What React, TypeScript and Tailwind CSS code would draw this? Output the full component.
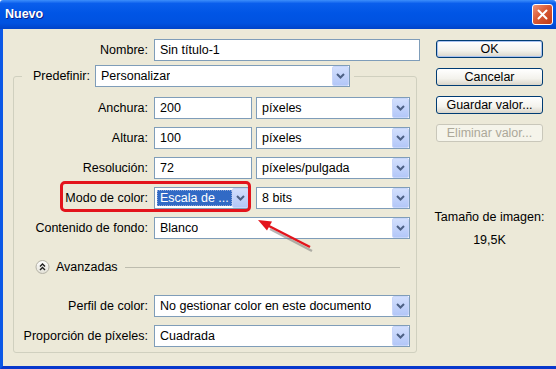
import React from "react"

const Chevron = () => (
  <svg width="9" height="6" viewBox="0 0 9 6">
    <path d="M1 1l3.5 3.5L8 1" fill="none" stroke="#4D6185" strokeWidth="2" />
  </svg>
)

// XP combo arrow button
const DropButton = () => (
  <div className="ml-auto flex h-full w-[17px] shrink-0 items-center justify-center rounded-[2px] border border-[#C8D6FA] bg-[linear-gradient(to_bottom,#D2DFFD,#B3C7F8)]">
    <Chevron />
  </div>
)

function Combo({ value, className }: { value: React.ReactNode; className: string }) {
  return (
    <div className={"flex h-[22px] items-center border border-[#7F9DB9] bg-white " + className}>
      <span className="truncate pl-[5px]">{value}</span>
      <DropButton />
    </div>
  )
}

function TextBox({ value, className }: { value: string; className: string }) {
  return (
    <div className={"flex h-[22px] items-center border border-[#7F9DB9] bg-white pl-[5px] " + className}>
      {value}
    </div>
  )
}

function Row({ label, children }: { label: string; children: React.ReactNode }) {
  return (
    <div className="relative flex h-[22px] items-center">
      <span className="w-[134px] whitespace-nowrap text-right">{label}</span>
      <div className="ml-[6px] flex">{children}</div>
    </div>
  )
}

function XPButton({ label, primary, disabled }: { label: string; primary?: boolean; disabled?: boolean }) {
  if (disabled) {
    return (
      <div className="flex h-[18px] items-center justify-center rounded-[3px] border border-[#C9C7BA] bg-[#F5F4EA] text-[#ACA899]">
        {label}
      </div>
    )
  }
  return (
    <div
      className={
        "flex h-[18px] items-center justify-center rounded-[3px] border border-[#003C74] bg-[linear-gradient(to_bottom,#FFFFFF,#F3F2EC_60%,#D9D5CA)] " +
        (primary ? "shadow-[inset_0_0_0_1px_#A9C2F0]" : "")
      }
    >
      {label}
    </div>
  )
}

export default function App() {
  return (
    <div className="relative flex h-[369px] w-[556px] flex-col overflow-hidden font-['Liberation_Sans',Arial,sans-serif] text-[12.5px] text-black">
      {/* title bar */}
      <div className="flex h-[29px] items-center rounded-t-[3px] bg-[linear-gradient(to_bottom,#3D8EFB_0%,#0A5EEC_12%,#0055E5_45%,#0052E0_80%,#0043C9_100%)] pl-[5px] pr-[3px]">
        <span className="text-[12.5px] font-bold text-white [text-shadow:1px_1px_0_#0A1E8A]">Nuevo</span>
        <div className="ml-auto flex h-[21px] w-[21px] items-center justify-center rounded-[3px] border border-white bg-[linear-gradient(135deg,#F0957A,#D85A36_45%,#C13B17)]">
          <svg width="11" height="11" viewBox="0 0 11 11">
            <path d="M1.5 1.5l8 8M9.5 1.5l-8 8" stroke="white" strokeWidth="2" strokeLinecap="round" />
          </svg>
        </div>
      </div>

      <div className="flex flex-1 border-b-[3px] border-l-[3px] border-b-[#0838CC] border-l-[#0B58E6] bg-[#ECE9D8]">
        {/* left side */}
        <div className="ml-[10px] w-[407px] pt-[10px]">
          <div className="flex h-[22px] items-center">
            <span className="w-[135px] text-right">Nombre:</span>
            <TextBox value="Sin título-1" className="ml-[6px] w-[266px]" />
          </div>

          <fieldset className="mt-[4px] w-[404px] rounded-[3px] border border-[#D0D0BF] pb-[5px]">
            <legend className="ml-[8px] flex items-center pr-[4px]">
              <span className="w-[68px] text-right">Predefinir:</span>
              <Combo value="Personalizar" className="ml-[5px] w-[255px]" />
            </legend>

            <div className="mt-[10px] flex flex-col gap-[8px]">
              <Row label="Anchura:">
                <TextBox value="200" className="w-[98px]" />
                <Combo value="píxeles" className="ml-[4px] w-[154px]" />
              </Row>
              <Row label="Altura:">
                <TextBox value="100" className="w-[98px]" />
                <Combo value="píxeles" className="ml-[4px] w-[154px]" />
              </Row>
              <Row label="Resolución:">
                <TextBox value="72" className="w-[98px]" />
                <Combo value="píxeles/pulgada" className="ml-[4px] w-[154px]" />
              </Row>
              <Row label="Modo de color:">
                <div className="flex h-[22px] w-[94px] items-center border border-[#7F9DB9] bg-white">
                  <span className="ml-[2px] flex h-[16px] items-center whitespace-nowrap border border-dotted border-[#8FA8D8] bg-[#316AC5] px-[2px] text-white">
                    Escala de ...
                  </span>
                  <DropButton />
                </div>
                <Combo value="8 bits" className="ml-[8px] w-[154px]" />
                {/* red annotation box */}
                <div className="absolute left-[46px] top-[-6px] h-[31px] w-[191px] rounded-[5px] border-[3px] border-[#E3141C]" />
              </Row>
              <Row label="Contenido de fondo:">
                <Combo value="Blanco" className="w-[256px]" />
              </Row>
            </div>

            <div className="mt-[21px] flex h-[14px] items-center">
              <svg className="ml-[21px]" width="15" height="14" viewBox="0 0 15 14">
                <defs>
                  <linearGradient id="tg" x1="0" y1="0" x2="0" y2="1">
                    <stop offset="0" stopColor="#FFFFFF" />
                    <stop offset="1" stopColor="#E2E0D6" />
                  </linearGradient>
                </defs>
                <circle cx="7.5" cy="7" r="6.5" fill="url(#tg)" stroke="#B4B2A6" />
                <path d="M5 6.5l2.5-2.5 2.5 2.5M5 10l2.5-2.5 2.5 2.5" fill="none" stroke="#1E1E1E" strokeWidth="1.4" />
              </svg>
              <span className="ml-[6px]">Avanzadas</span>
              <div className="ml-[7px] mr-[16px] flex-1 border-t border-[#BDBCAE]" />
            </div>

            <div className="mt-[21px] flex flex-col gap-[8px]">
              <Row label="Perfil de color:">
                <Combo value="No gestionar color en este documento" className="w-[256px]" />
              </Row>
              <Row label="Proporción de píxeles:">
                <Combo value="Cuadrada" className="w-[256px]" />
              </Row>
            </div>
          </fieldset>
        </div>

        {/* right side */}
        <div className="ml-[16px] flex w-[107px] flex-col pt-[11px]">
          <div className="flex flex-col gap-[10px]">
            <XPButton label="OK" primary />
            <XPButton label="Cancelar" />
            <XPButton label="Guardar valor..." />
            <XPButton label="Eliminar valor..." disabled />
          </div>
          <div className="-mx-[4px] mt-[64px] whitespace-nowrap text-center leading-[23px]">
            <div>Tamaño de imagen:</div>
            <div>19,5K</div>
          </div>
        </div>
      </div>

      {/* red arrow annotation */}
      <svg className="pointer-events-none absolute left-0 top-0" width="556" height="369">
        <line x1="312" y1="251" x2="270" y2="229" stroke="#7A7A7A" strokeOpacity="0.55" strokeWidth="2.5" />
        <line x1="310" y1="247" x2="267" y2="225" stroke="#E3141C" strokeWidth="2.5" />
        <polygon points="258,220 272,221.4 267,230.6" fill="#E3141C" />
      </svg>
    </div>
  )
}
